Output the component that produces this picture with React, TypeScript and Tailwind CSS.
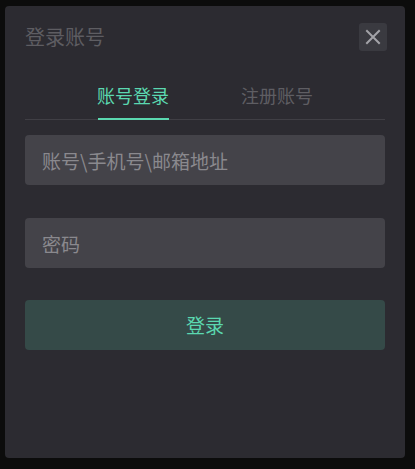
import React from "react";

export default function App() {
  const font = { fontFamily: '"Noto Sans CJK SC", "Noto Sans", sans-serif' };
  return (
    <div className="w-[415px] h-[469px] bg-[#0c0c0c] pt-[6px] pl-[5px]" style={font}>
      <div className="w-[400px] h-[452px] bg-[#2c2b31] rounded-[4px] px-[20px] pt-[17px] flex flex-col">
        <div className="flex items-center justify-between h-[28px]">
          <div className="text-[20px] leading-[28px] text-[#5e5d62]">登录账号</div>
          <button className="w-[28px] h-[28px] -mr-[2px] rounded-[3px] bg-[#3a3a40] flex items-center justify-center">
            <svg width="16" height="16" viewBox="0 0 16 16" fill="none" stroke="#a3a3a8" strokeWidth="2" strokeLinecap="square">
              <path d="M2 2 L14 14 M14 2 L2 14" />
            </svg>
          </button>
        </div>
        <div className="mt-[32px] flex justify-center gap-[72px] border-b border-[#403f45]">
          <div className="flex flex-col items-center w-[72px]">
            <span className="text-[18px] leading-[24px] text-[#5bd8b0] whitespace-nowrap">账号登录</span>
            <div className="mt-[11px] h-[2px] w-[71px] bg-[#5bd8b0] -mb-px" />
          </div>
          <div className="flex flex-col items-center w-[72px]">
            <span className="text-[18px] leading-[24px] text-[#5f5e63] whitespace-nowrap">注册账号</span>
            <div className="mt-[11px] h-[2px] w-[71px] -mb-px" />
          </div>
        </div>
        <input
          className="mt-[15px] h-[50px] w-full rounded-[4px] bg-[#444349] pl-[17px] text-[19px] text-[#d0d0d4] placeholder:text-[#8a898e] outline-none"
          placeholder="账号\手机号\邮箱地址"
          style={font}
        />
        <input
          type="password"
          className="mt-[33px] h-[50px] w-full rounded-[4px] bg-[#444349] pl-[17px] text-[19px] text-[#d0d0d4] placeholder:text-[#8a898e] outline-none"
          placeholder="密码"
          style={font}
        />
        <button
          className="mt-[32px] h-[50px] w-full rounded-[4px] bg-[#354a48] text-[19px] text-[#5bd8b0]"
          style={font}
        >
          登录
        </button>
      </div>
    </div>
  );
}
